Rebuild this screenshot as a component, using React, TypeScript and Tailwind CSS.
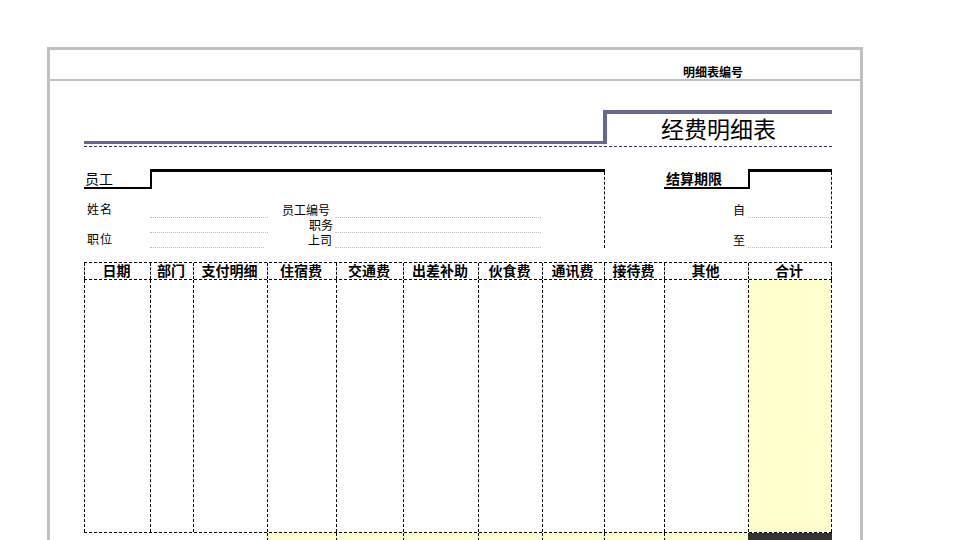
const cols = [
  { label: "日期", w: "w-[66px]" },
  { label: "部门", w: "w-[43px]" },
  { label: "支付明细", w: "w-[74px]" },
  { label: "住宿费", w: "w-[69px]" },
  { label: "交通费", w: "w-[67px]" },
  { label: "出差补助", w: "w-[75px]" },
  { label: "伙食费", w: "w-[64px]" },
  { label: "通讯费", w: "w-[62px]" },
  { label: "接待费", w: "w-[60px]" },
  { label: "其他", w: "w-[84px]" },
  { label: "合计", w: "w-[84px]" },
];

const dash = "border-dashed border-black";

function Line({ className = "" }: { className?: string }) {
  return <div className={"border-b border-dotted border-[#bdbdbd] " + className} />;
}

function Label({ children, className = "" }: { children: string; className?: string }) {
  return <div className={"self-end text-[12px] text-black " + className}>{children}</div>;
}

const upOne = "pb-[2px] leading-[13px]";
const upTwo = "pb-[4px] leading-[11px]";

export default function App() {
  return (
    <div className="h-[540px] w-[960px] overflow-hidden bg-white font-['Noto_Sans_CJK_SC',sans-serif] text-black">
      <div className="ml-[47px] mt-[47px] h-[600px] w-[816px] border-[3px] border-b-0 border-[#c0c0c0]">
        <div className="flex h-[31px] items-end justify-end border-b-2 border-[#c0c0c0] pb-px pr-[117px] text-[12px] font-bold leading-[12px]">
          明细表编号
        </div>

        <div className="ml-[34px] w-[748px] pt-[29px]">
          <div className="flex h-[34px] items-end">
            <div className="w-[519px] border-b-[3px] border-[#666699]" />
            <div className="flex h-[34px] flex-1 items-center justify-center border-l-4 border-t-4 border-[#666699] pb-[2px] pr-[2px] text-[23px] leading-none">
              经费明细表
            </div>
          </div>
          <div className="mt-[2px] border-b border-dashed border-[#3a3050]" />

          <div className="mt-[22px] flex h-[79px]">
            <div className="w-[520px]">
              <div className="flex h-[20px]">
                <div className="flex w-[66px] items-end border-b-2 border-black pl-px text-[14px] leading-[18px]">员工</div>
                <div className="-mr-px flex-1 border-l-2 border-t-[3px] border-black" />
              </div>
              <div className="grid grid-cols-[66px_118px_67px_206px] grid-rows-[29px_15px_15px]">
                <Label className={"pl-[3px] tracking-[1px] " + upTwo}>姓名</Label>
                <Line />
                <Label className={"pr-[5px] text-right " + upOne}>员工编号</Label>
                <Line />
                <div />
                <Line />
                <Label className={"pr-[2px] text-right " + upOne}>职务</Label>
                <Line />
                <Label className={"pl-[3px] tracking-[1px] " + upTwo}>职位</Label>
                <Line className="w-[114px]" />
                <Label className={"pr-[3px] text-right " + upOne}>上司</Label>
                <Line />
              </div>
            </div>

            <div className={"mt-[3px] h-[76px] w-[228px] border-x pl-[59px] " + dash}>
              <div className="-mr-px -mt-[3px] flex h-[20px]">
                <div className="flex w-[84px] items-end border-b-2 border-black pl-[2px] text-[14px] font-bold leading-[18px]">结算期限</div>
                <div className="flex-1 border-l-2 border-t-[3px] border-black" />
              </div>
              <div className="grid grid-cols-[84px_83px] grid-rows-[29px_30px]">
                <Label className={"pr-[3px] text-right " + upOne}>自</Label>
                <Line />
                <Label className={"pr-[3px] text-right " + upOne}>至</Label>
                <Line />
              </div>
            </div>
          </div>

          <div className="mt-[14px]">
            <div className={"flex h-[18px] border-y " + dash}>
              {cols.map((c, i) => (
                <div
                  key={c.label}
                  className={`${c.w} ${i === 10 ? "border-x" : "border-l"} ${dash} pr-[2px] text-center text-[14px] font-bold leading-[14px]`}
                >
                  {c.label}
                </div>
              ))}
            </div>
            <div className="flex h-[252px]">
              {cols.map((c, i) => (
                <div
                  key={c.label}
                  className={`${c.w} ${i === 10 ? "border-x bg-[#ffffcc]" : "border-l"} ${dash}`}
                />
              ))}
            </div>
            <div className={"flex h-[24px] border-t " + dash}>
              {cols.map((c, i) => (
                <div
                  key={c.label}
                  className={`${c.w} ${
                    i < 3
                      ? ""
                      : i === 10
                        ? "bg-[#333333]"
                        : `border-l bg-[#ffffcc] ${dash}`
                  }`}
                />
              ))}
            </div>
          </div>
        </div>
      </div>
    </div>
  );
}
